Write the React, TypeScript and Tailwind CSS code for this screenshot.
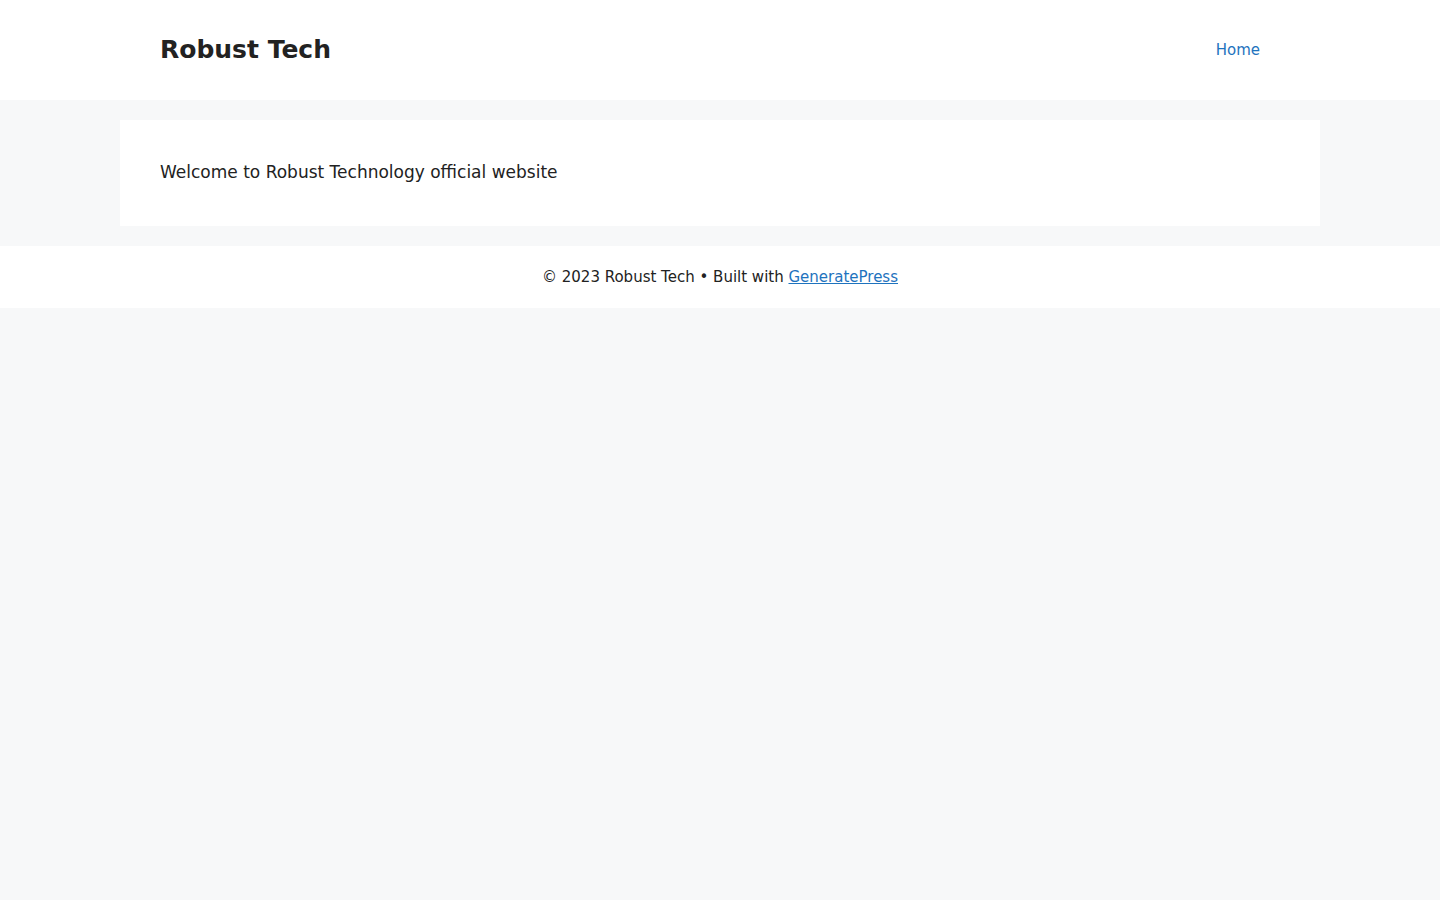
export default function App() {
  return (
    <div
      className="min-h-[900px] bg-[#f7f8f9] text-[#222222] text-[17px] leading-[1.5]"
      style={{ fontFamily: '"DejaVu Sans", sans-serif' }}
    >
      <header className="bg-white">
        <div className="mx-auto flex w-[1200px] items-center justify-between px-10 py-5">
          <p className="text-[25px] font-bold leading-[1.2] text-[#222222]">Robust Tech</p>
          <nav>
            <a href="#" className="block px-5 text-[15px] leading-[60px] text-[#1e73be]">
              Home
            </a>
          </nav>
        </div>
      </header>
      <main className="mx-auto w-[1200px] py-5">
        <article className="bg-white p-10">
          <p>Welcome to Robust Technology official website</p>
        </article>
      </main>
      <footer className="bg-white">
        <div className="mx-auto w-[1200px] px-10 py-5 text-center text-[15px] leading-[1.5]">
          <span>© 2023 Robust Tech • Built with </span>
          <a href="#" className="text-[#1e73be] underline">
            GeneratePress
          </a>
        </div>
      </footer>
    </div>
  );
}
